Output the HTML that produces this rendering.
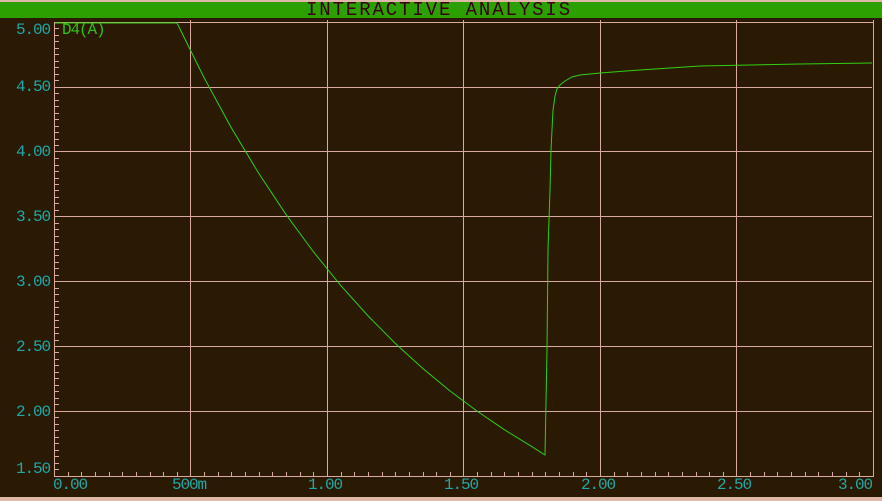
<!DOCTYPE html><html><head><style>
body{margin:0;width:882px;height:501px;background:#2a1a04;overflow:hidden;position:relative;font-family:"Liberation Mono",monospace}
.t{position:absolute;color:#20a8a8;font-size:16px;letter-spacing:-1.1px;line-height:14px}
</style></head><body>
<div style="position:absolute;left:0;top:0;width:882px;height:2px;background:#e0b8a8"></div>
<div style="position:absolute;left:0;top:2px;width:882px;height:16px;background:#2ca000"></div>
<div style="position:absolute;left:306px;top:1px;font-size:19px;letter-spacing:1.9px;color:#3a0010;line-height:18px">INTERACTIVE ANALYSIS</div>
<div style="position:absolute;left:0;top:497px;width:882px;height:4px;background:#e0b8a8"></div>
<svg width="882" height="501" style="position:absolute;left:0;top:0" shape-rendering="crispEdges">
<g stroke="#d8aaa0" stroke-width="1" fill="none">
<line x1="54.5" y1="22" x2="54.5" y2="477"/>
<line x1="54" y1="476.5" x2="873" y2="476.5"/>
<line x1="54" y1="22.5" x2="873" y2="22.5"/>
<line x1="873.5" y1="20" x2="873.5" y2="477"/>
<line x1="54" y1="87.5" x2="872" y2="87.5"/>
<line x1="54" y1="151.5" x2="872" y2="151.5"/>
<line x1="54" y1="216.5" x2="872" y2="216.5"/>
<line x1="54" y1="281.5" x2="872" y2="281.5"/>
<line x1="54" y1="346.5" x2="872" y2="346.5"/>
<line x1="54" y1="411.5" x2="872" y2="411.5"/>
<line x1="190.5" y1="20" x2="190.5" y2="477"/>
<line x1="327.5" y1="20" x2="327.5" y2="477"/>
<line x1="463.5" y1="20" x2="463.5" y2="477"/>
<line x1="600.5" y1="20" x2="600.5" y2="477"/>
<line x1="736.5" y1="20" x2="736.5" y2="477"/>
</g>
<g id="ty" stroke="#d8aaa0"></g>
<g id="tx" stroke="#d8aaa0"></g>
<polyline fill="none" stroke="#30d010" stroke-width="1" shape-rendering="auto" points="55,23 177,23 204,77.5 231.3,127.7 258.6,173.1 285.9,214.3 313.2,251.5 340.4,285.1 367.7,315.5 395,343.1 422.3,368 449.6,390.6 476.9,411 504.2,429.6 531.4,446.3 545,455 547,350 548,250 550,190 551,150 552,130 553,110 555,96 557,89 560,85 565,81 572,77 580,75 600,73 640,70 700,66 800,64 872,63"/>
</svg>
<script>
var s='';for(var i=0;i<71;i++){var y=22+i*6.48;if(i%10)s+='<line x1="55" x2="59" y1="'+(Math.round(y)+0.5)+'" y2="'+(Math.round(y)+0.5)+'"/>';}
document.getElementById('ty').innerHTML=s;s='';
for(var j=1;j<60;j++){var x=54+j*13.65;if(j%10)s+='<line y1="472" y2="476" x1="'+(Math.round(x)+0.5)+'" x2="'+(Math.round(x)+0.5)+'"/>';}
document.getElementById('tx').innerHTML=s;
</script>
<div class="t" style="left:16px;top:23px">5.00</div>
<div class="t" style="left:16px;top:80px">4.50</div>
<div class="t" style="left:16px;top:145px">4.00</div>
<div class="t" style="left:16px;top:210px">3.50</div>
<div class="t" style="left:16px;top:275px">3.00</div>
<div class="t" style="left:16px;top:340px">2.50</div>
<div class="t" style="left:16px;top:405px">2.00</div>
<div class="t" style="left:16px;top:462px">1.50</div>
<div class="t" style="left:53px;top:478px">0.00</div>
<div class="t" style="left:172px;top:478px">500m</div>
<div class="t" style="left:308px;top:478px">1.00</div>
<div class="t" style="left:444px;top:478px">1.50</div>
<div class="t" style="left:581px;top:478px">2.00</div>
<div class="t" style="left:717px;top:478px">2.50</div>
<div class="t" style="left:838px;top:478px">3.00</div>
<div class="t" style="left:62px;top:23px;color:#30c010">D4(A)</div>
</body></html>
